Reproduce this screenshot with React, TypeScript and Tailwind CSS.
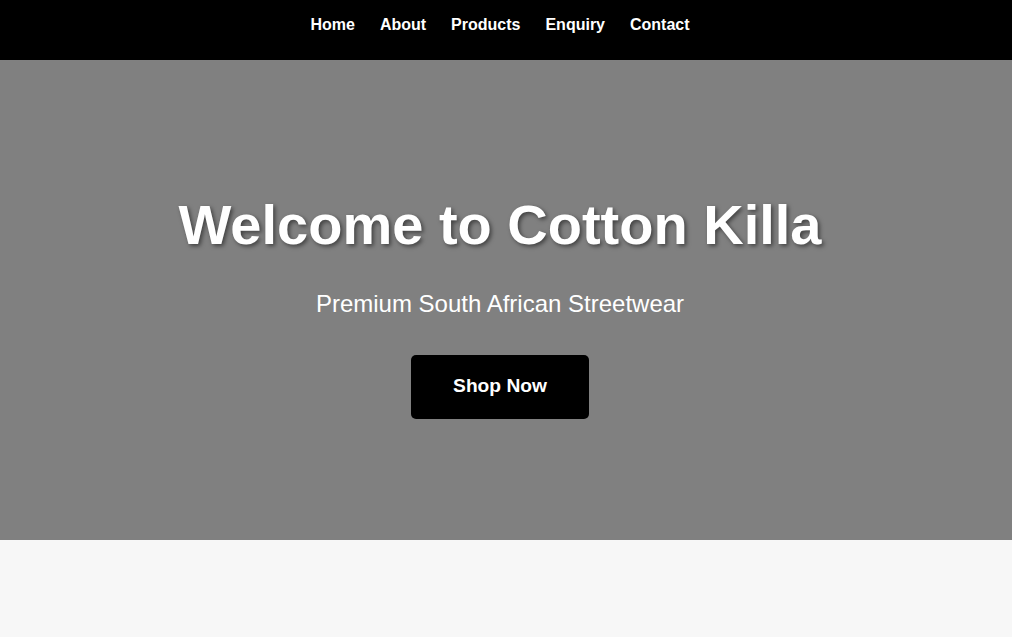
export default function App() {
  const links = ["Home", "About", "Products", "Enquiry", "Contact"];
  return (
    <div className="min-h-[637px] bg-[#f7f7f7]" style={{ fontFamily: '"Liberation Sans", Arial, sans-serif' }}>
      <nav className="h-[60px] bg-black pt-[13px] pr-[12px]">
        <ul className="flex justify-center gap-[25px]">
          {links.map((l) => (
            <li key={l}>
              <a href="#" className="text-[16px] font-bold leading-[18px] text-white">{l}</a>
            </li>
          ))}
        </ul>
      </nav>
      <section className="flex h-[480px] flex-col items-center justify-center bg-[#808080] pr-[12px] text-white">
        <div className="mt-[11px] flex flex-col items-center">
          <h1 className="text-[56px] font-bold leading-[64px] [text-shadow:2px_2px_4px_rgba(0,0,0,0.5)]">
            Welcome to Cotton Killa
          </h1>
          <p className="mt-[33px] text-[24px] leading-[28px]">Premium South African Streetwear</p>
          <a href="#" className="mt-[37px] flex h-[64px] w-[178px] items-center justify-center rounded-[5px] bg-black text-[19.2px] font-bold text-white">
            Shop Now
          </a>
        </div>
      </section>
    </div>
  );
}
